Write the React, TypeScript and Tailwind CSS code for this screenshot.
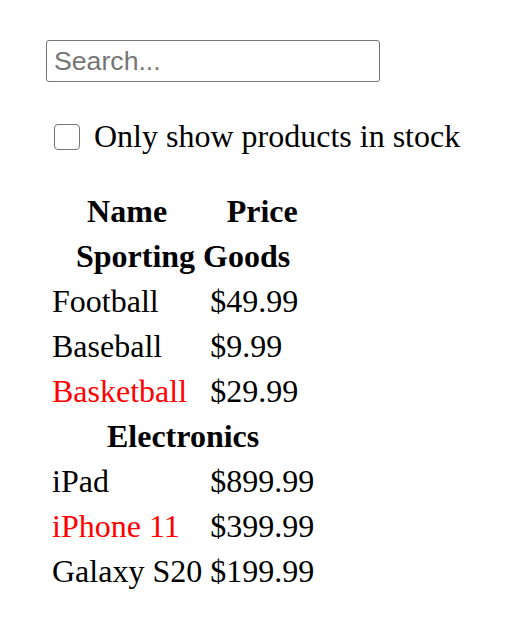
import React, { useState } from "react";

type Product = { category: string; price: string; stocked: boolean; name: string };

const PRODUCTS: Product[] = [
  { category: "Sporting Goods", price: "$49.99", stocked: true, name: "Football" },
  { category: "Sporting Goods", price: "$9.99", stocked: true, name: "Baseball" },
  { category: "Sporting Goods", price: "$29.99", stocked: false, name: "Basketball" },
  { category: "Electronics", price: "$899.99", stocked: true, name: "iPad" },
  { category: "Electronics", price: "$399.99", stocked: false, name: "iPhone 11" },
  { category: "Electronics", price: "$199.99", stocked: true, name: "Galaxy S20" },
];

export default function App() {
  const [filterText, setFilterText] = useState("");
  const [inStockOnly, setInStockOnly] = useState(false);

  const rows: React.ReactNode[] = [];
  let lastCategory: string | null = null;

  PRODUCTS.forEach((product) => {
    if (product.name.toLowerCase().indexOf(filterText.toLowerCase()) === -1) return;
    if (inStockOnly && !product.stocked) return;
    if (product.category !== lastCategory) {
      rows.push(
        <tr key={product.category}>
          <th colSpan={2} className="px-[2px] py-[2px] text-center font-bold">
            {product.category}
          </th>
        </tr>
      );
    }
    rows.push(
      <tr key={product.name}>
        <td className={`px-[2px] py-[2px] text-left ${product.stocked ? "text-black" : "text-[#ff0000]"}`}>
          {product.name}
        </td>
        <td className="px-[2px] py-[2px] text-left">{product.price}</td>
      </tr>
    );
    lastCategory = product.category;
  });

  return (
    <div className="min-h-screen bg-white pl-[46px] pt-[40px] text-black font-['Liberation_Serif',serif]">
      {/* search bar */}
      <form>
        <input
          type="text"
          value={filterText}
          placeholder="Search..."
          onChange={(e) => setFilterText(e.target.value)}
          className="block h-[42px] w-[334px] rounded-[3px] border border-[#767676] bg-white px-[7px] text-[26.67px] font-['Liberation_Sans',Arial,sans-serif] text-black outline-none placeholder:text-[#757575]"
        />
        <label className="mt-[36px] flex h-[37px] items-center text-[32px] leading-[1.15]">
          <input
            type="checkbox"
            checked={inStockOnly}
            onChange={(e) => setInStockOnly(e.target.checked)}
            className="ml-[8px] mr-[14px] h-[26px] w-[26px] shrink-0 appearance-none rounded-[4px] border border-[#767676] bg-white checked:bg-[#0075ff]"
          />
          Only show products in stock
        </label>
      </form>

      {/* product table */}
      <table className="mt-[32px] border-separate border-spacing-[4px] text-[32px] leading-[37px]">
        <thead>
          <tr>
            <th className="px-[2px] py-[2px] text-center font-bold">Name</th>
            <th className="px-[2px] py-[2px] text-center font-bold">Price</th>
          </tr>
        </thead>
        <tbody>{rows}</tbody>
      </table>
    </div>
  );
}
